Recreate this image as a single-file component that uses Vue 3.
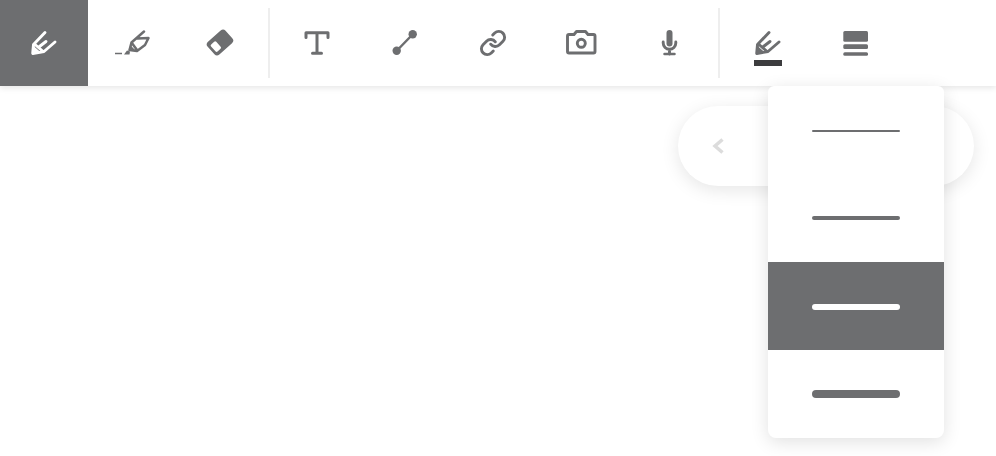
<script setup>
import { ref } from "vue";

const activeTool = ref("pen");
const activeWeight = ref(6);
const weights = [2, 4, 6, 8];
</script>

<template>
  <div class="page">
    <div class="toolbar">
      <button class="tool" :class="{ active: activeTool === 'pen' }" @click="activeTool = 'pen'">
        <svg width="28" height="28" viewBox="0 0 28 28">
          <path d="M15 3.500 3.500 15.500 2.700 24.500 14 22.500 25 13M5 15.500 12.500 22M9.500 17.500 16 12.500" class="line thick" />
          <path d="M2 25.500 3 16.500 11 23.500Z" class="fill" />
        </svg>
      </button>
      <button class="tool" :class="{ active: activeTool === 'marker' }" @click="activeTool = 'marker'">
        <svg width="36" height="28" viewBox="0 0 36 28">
          <path d="M1 24.500h7" class="thin" />
          <path d="M10 25.500 13 21.500 16 22.500 15.500 25.500Z" class="fill" />
          <path d="M30 2.500 17.500 13.500 15.500 21 23 22 31 16 34.500 9 23.500 9.500M17.500 13.500 23 21" class="line" />
          <path d="M15.500 21 16.700 16.500 21.500 21.500Z" class="fill" />
        </svg>
      </button>
      <button class="tool" @click="activeTool = 'eraser'">
        <svg width="28" height="28" viewBox="0 0 28 28">
          <g transform="rotate(-42 14 13.500)">
            <rect x="2" y="5" width="24" height="17" rx="3.500" class="fill" />
            <rect x="4.700" y="9" width="7" height="9.500" rx="1.500" class="cut" />
          </g>
        </svg>
      </button>
      <span class="sep first"></span>
      <button class="tool" @click="activeTool = 'text'">
        <svg width="28" height="28" viewBox="0 0 28 28">
          <path d="M3 8.500V3.700H25V8.500M14 3.700V24.300M9.500 24.300h9" class="bold" />
        </svg>
      </button>
      <button class="tool" @click="activeTool = 'line'">
        <svg width="28" height="28" viewBox="0 0 28 28">
          <path d="M6 21.500 21.500 5.500" class="line" />
          <circle cx="5.700" cy="21.700" r="4.200" class="fill" />
          <circle cx="21.700" cy="5.300" r="4.200" class="fill" />
        </svg>
      </button>
      <button class="tool" @click="activeTool = 'link'">
        <svg width="28" height="28" viewBox="0 0 24 24">
          <path d="M10 13a5 5 0 0 0 7.540.540l3-3a5 5 0 0 0-7.070-7.070l-1.720 1.710M14 11a5 5 0 0 0-7.540-.540l-3 3a5 5 0 0 0 7.070 7.070l1.710-1.710" class="line" />
        </svg>
      </button>
      <button class="tool" @click="activeTool = 'camera'">
        <svg width="32" height="28" viewBox="0 0 32 28">
          <path d="M4 5.500h5L11.500 2.500h9L23 5.500h5.500a1.500 1.500 0 0 1 1.500 1.500V22.500a1.500 1.500 0 0 1-1.500 1.500H4a1.500 1.500 0 0 1-1.500-1.500V7A1.500 1.500 0 0 1 4 5.500Z" class="line thick" />
          <circle cx="16.300" cy="14.300" r="4" class="line thick" />
        </svg>
      </button>
      <button class="tool" @click="activeTool = 'mic'">
        <svg width="28" height="28" viewBox="0 0 28 28">
          <rect x="11.500" y="1" width="6" height="16.500" rx="3" class="fill" />
          <path d="M8.200 13v1a6.300 6.300 0 0 0 12.600 0v-1M14.500 20.500V25" class="line thick" />
          <path d="M9.500 25h10" class="line" />
        </svg>
      </button>
      <span class="sep"></span>
      <button class="tool picked">
        <svg width="28" height="28" viewBox="0 0 28 28">
          <path d="M15 3.500 3.500 15.500 2.700 24.500 14 22.500 25 13M5 15.500 12.500 22M9.500 17.500 16 12.500" class="line thick" />
          <path d="M2 25.500 3 16.500 11 23.500Z" class="fill" />
        </svg>
        <span class="underline"></span>
      </button>
      <button class="tool">
        <svg width="28" height="28" viewBox="0 0 28 28">
          <rect x="1.300" y="2" width="24.700" height="10.700" rx="1.500" class="fill" />
          <rect x="1.300" y="15.300" width="24.700" height="4.700" rx="1.500" class="fill" />
          <rect x="1.300" y="23.300" width="24.700" height="3.400" rx="1.500" class="fill" />
        </svg>
      </button>
    </div>

    <div class="pager">
      <svg class="chevron" width="14" height="18" viewBox="0 0 14 18">
        <path d="M11.500 2.500 4 9l7.500 6.500" />
      </svg>
    </div>

    <div class="weights">
      <button
        v-for="w in weights"
        :key="w"
        class="weight"
        :class="{ active: activeWeight === w }"
        @click="activeWeight = w"
      >
        <span class="stroke" :style="{ height: w + 'px' }"></span>
      </button>
    </div>
  </div>
</template>

<style>
body {
  background: #fff;
  overflow: hidden;
}
</style>

<style scoped>
.page {
  position: relative;
  width: 996px;
  height: 456px;
  overflow: hidden;
}
.toolbar {
  display: flex;
  align-items: stretch;
  height: 86px;
  background: #fff;
  box-shadow: 0 2px 6px rgba(0, 0, 0, 0.1);
}
.tool {
  position: relative;
  display: flex;
  align-items: center;
  justify-content: center;
  width: 88px;
  padding: 0;
  border: 0;
  background: none;
  color: #6d6e70;
}
.tool.active {
  background: #6d6e70;
  color: #fff;
}
.sep {
  width: 2px;
  margin: 8px 4px 8px 5px;
  background: #eee;
}
.sep.first {
  margin: 8px 3px 8px 4px;
}
.line, .thin, .bold {
  fill: none;
  stroke: currentColor;
  stroke-linecap: round;
  stroke-linejoin: round;
}
.line {
  stroke-width: 2.500;
}
.line.thick {
  stroke-width: 2.900;
}
.thin {
  stroke-width: 1.500;
  stroke-linecap: butt;
}
.bold {
  stroke-width: 3;
}
.fill {
  fill: currentColor;
}
.cut {
  fill: #fff;
}
.underline {
  position: absolute;
  left: 30px;
  top: 60px;
  width: 28px;
  height: 6px;
  background: #3c3c3e;
}
.pager {
  position: absolute;
  left: 678px;
  top: 106px;
  display: flex;
  align-items: center;
  width: 296px;
  height: 80px;
  padding-left: 33px;
  box-sizing: border-box;
  border-radius: 40px;
  background: #fff;
  box-shadow: 0 4px 18px rgba(0, 0, 0, 0.1);
}
.chevron path {
  fill: none;
  stroke: #dcdcdc;
  stroke-width: 3.500;
}
.weights {
  position: absolute;
  left: 768px;
  top: 86px;
  width: 176px;
  border-radius: 6px 6px 8px 8px;
  overflow: hidden;
  background: #fff;
  box-shadow: 0 4px 18px rgba(0, 0, 0, 0.12);
}
.weight {
  display: flex;
  align-items: center;
  justify-content: center;
  box-sizing: border-box;
  width: 100%;
  height: 88px;
  padding: 0;
  border: 0;
  background: none;
}
.weight:nth-child(odd) {
  padding-top: 2px;
}
.weight.active {
  background: #6d6e70;
}
.stroke {
  width: 88px;
  border-radius: 4px;
  background: #6d6e70;
}
.weight.active .stroke {
  background: #fff;
}
</style>
